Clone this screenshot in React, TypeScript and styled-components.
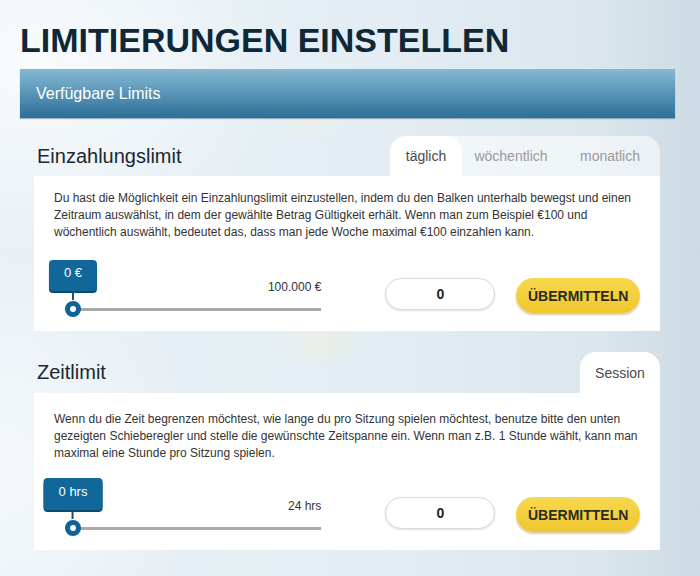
import React from "react";
import styled, { createGlobalStyle } from "styled-components";

const GlobalStyle = createGlobalStyle`
  html, body {
    margin: 0;
    padding: 0;
  }
  body {
    width: 700px;
    height: 576px;
    overflow: hidden;
    font-family: "Liberation Sans", Arial, sans-serif;
    background:
      radial-gradient(ellipse 45px 30px at 310px 112px, rgba(248, 240, 210, 0.35), rgba(248, 240, 210, 0) 100%),
      radial-gradient(ellipse 50px 30px at 320px 338px, rgba(248, 238, 205, 0.35), rgba(248, 238, 205, 0) 100%),
      radial-gradient(ellipse 260px 200px at 40px 60px, rgba(250, 252, 253, 0.9), rgba(250, 252, 253, 0) 100%),
      radial-gradient(ellipse 200px 240px at 0px 470px, rgba(248, 251, 252, 0.8), rgba(248, 251, 252, 0) 100%),
      linear-gradient(90deg, #e8f0f5 0%, #e3edf3 55%, #dbe6ed 85%, #cddbe4 100%);
  }
`;

const Page = styled.div`
  padding: 20px 25px 0 20px;
`;

const Title = styled.h1`
  margin: 0;
  font-size: 34px;
  line-height: 40px;
  font-weight: 700;
  color: #0e2838;
`;

const Banner = styled.div`
  margin-top: 9px;
  height: 49px;
  display: flex;
  align-items: center;
  padding-left: 16px;
  color: #fff;
  font-size: 16px;
  background: linear-gradient(180deg, #86b9d3 0%, #5d97b9 45%, #2d6f98 100%);
  box-shadow: 0 1px 1px rgba(20, 60, 90, 0.35);
`;

const Section = styled.section<{ $first?: boolean }>`
  margin: ${(p) => (p.$first ? "18px" : "21px")} 15px 0 14px;
`;

const SectionHead = styled.div<{ $tall?: boolean }>`
  height: ${(p) => (p.$tall ? "41px" : "40px")};
  display: flex;
  justify-content: space-between;
  align-items: stretch;
`;

const SectionTitle = styled.h2`
  margin: 0;
  padding-left: 3px;
  align-self: center;
  font-size: 20px;
  font-weight: 400;
  color: #1b2731;
`;

const TabStrip = styled.div`
  display: flex;
  border-radius: 16px 16px 0 0;
  background: rgba(255, 255, 255, 0.55);
`;

const Tab = styled.div<{ $active?: boolean; $w: number }>`
  width: ${(p) => p.$w}px;
  display: flex;
  align-items: center;
  justify-content: center;
  font-size: 14px;
  color: ${(p) => (p.$active ? "#4a4a4a" : "#9a9a9a")};
  background: ${(p) => (p.$active ? "#fff" : "transparent")};
  border-radius: 16px 16px 0 0;
`;

const Card = styled.div<{ $padTop: number }>`
  background: #fff;
  padding: ${(p) => p.$padTop}px 20px 14px 20px;
`;

const Description = styled.p`
  margin: 0;
  font-size: 12px;
  line-height: 17px;
  color: #333;
`;

const ControlRow = styled.div<{ $gap: number }>`
  margin-top: ${(p) => p.$gap}px;
  display: flex;
  align-items: flex-start;
`;

const Slider = styled.div`
  position: relative;
  width: 268px;
  height: 57px;
  display: flex;
  flex-direction: column;
`;

const Bubble = styled.div<{ $tall?: boolean }>`
  position: absolute;
  left: 19px;
  top: ${(p) => (p.$tall ? "-1px" : "0")};
  transform: translateX(-50%);
  height: ${(p) => (p.$tall ? "32px" : "31px")};
  box-sizing: border-box;
  padding: ${(p) => (p.$tall ? "6px" : "5px")} 15px 0;
  font-size: 13px;
  line-height: 15px;
  color: #fff;
  white-space: nowrap;
  background: #11679a;
  border-radius: 4px;
  box-shadow: 0 2px 0 #0b4b6f;

  &::after {
    content: "";
    position: absolute;
    left: 50%;
    top: 100%;
    width: 2px;
    height: 9px;
    margin-left: -1px;
    background: #1f4f66;
  }
`;

const MaxValue = styled.div`
  align-self: flex-end;
  margin-top: 20px;
  font-size: 12px;
  line-height: 14px;
  color: #333;
`;

const Track = styled.div`
  margin: 14px 0 0 19px;
  height: 3px;
  background: #aaa9a6;
`;

const Thumb = styled.div`
  position: absolute;
  left: 11px;
  top: 41px;
  width: 16px;
  height: 16px;
  box-sizing: border-box;
  border-radius: 50%;
  border: 5px solid #0f6294;
  background: #fff;
`;

const AmountInput = styled.input`
  margin: 18px 0 0 64px;
  width: 110px;
  height: 32px;
  box-sizing: border-box;
  border: 1px solid #d9d9d9;
  border-radius: 16px;
  box-shadow: 0 1px 2px rgba(0, 0, 0, 0.12);
  background: #fff;
  text-align: center;
  font-family: "Liberation Sans", Arial, sans-serif;
  font-size: 14px;
  font-weight: 700;
  color: #222;
  outline: none;
`;

const SubmitButton = styled.button`
  margin: 18px 0 0 21px;
  width: 124px;
  height: 35px;
  border: none;
  border-radius: 18px;
  background: linear-gradient(180deg, #f7d84c 0%, #efc72f 100%);
  box-shadow: 0 2px 2px rgba(140, 110, 10, 0.35);
  font-family: "Liberation Sans", Arial, sans-serif;
  font-size: 14px;
  font-weight: 700;
  color: #2b2a20;
  padding: 0;
`;

interface LimitProps {
  title: string;
  tabs: { label: string; width: number; active?: boolean }[];
  text: string;
  min: string;
  max: string;
  first?: boolean;
}

const LimitSection = ({ title, tabs, text, min, max, first }: LimitProps) => (
  <Section $first={first}>
    <SectionHead $tall={!first}>
      <SectionTitle>{title}</SectionTitle>
      <TabStrip>
        {tabs.map((t) => (
          <Tab key={t.label} $active={t.active} $w={t.width}>
            {t.label}
          </Tab>
        ))}
      </TabStrip>
    </SectionHead>
    <Card $padTop={first ? 14 : 18}>
      <Description>{text}</Description>
      <ControlRow $gap={first ? 19 : 17}>
        <Slider>
          <Bubble $tall={!first}>{min}</Bubble>
          <MaxValue>{max}</MaxValue>
          <Track />
          <Thumb />
        </Slider>
        <AmountInput readOnly value="0" />
        <SubmitButton>ÜBERMITTELN</SubmitButton>
      </ControlRow>
    </Card>
  </Section>
);

export default function App() {
  return (
    <>
      <GlobalStyle />
      <Page>
        <Title>LIMITIERUNGEN EINSTELLEN</Title>
        <Banner>Verfügbare Limits</Banner>
        <LimitSection
          first
          title="Einzahlungslimit"
          tabs={[
            { label: "täglich", width: 72, active: true },
            { label: "wöchentlich", width: 98 },
            { label: "monatlich", width: 100 },
          ]}
          text="Du hast die Möglichkeit ein Einzahlungslimit einzustellen, indem du den Balken unterhalb bewegst und einen Zeitraum auswählst, in dem der gewählte Betrag Gültigkeit erhält. Wenn man zum Beispiel €100 und wöchentlich auswählt, bedeutet das, dass man jede Woche maximal €100 einzahlen kann."
          min="0 €"
          max="100.000 €"
        />
        <LimitSection
          title="Zeitlimit"
          tabs={[{ label: "Session", width: 80, active: true }]}
          text="Wenn du die Zeit begrenzen möchtest, wie lange du pro Sitzung spielen möchtest, benutze bitte den unten gezeigten Schieberegler und stelle die gewünschte Zeitspanne ein. Wenn man z.B. 1 Stunde wählt, kann man maximal eine Stunde pro Sitzung spielen."
          min="0 hrs"
          max="24 hrs"
        />
      </Page>
    </>
  );
}
